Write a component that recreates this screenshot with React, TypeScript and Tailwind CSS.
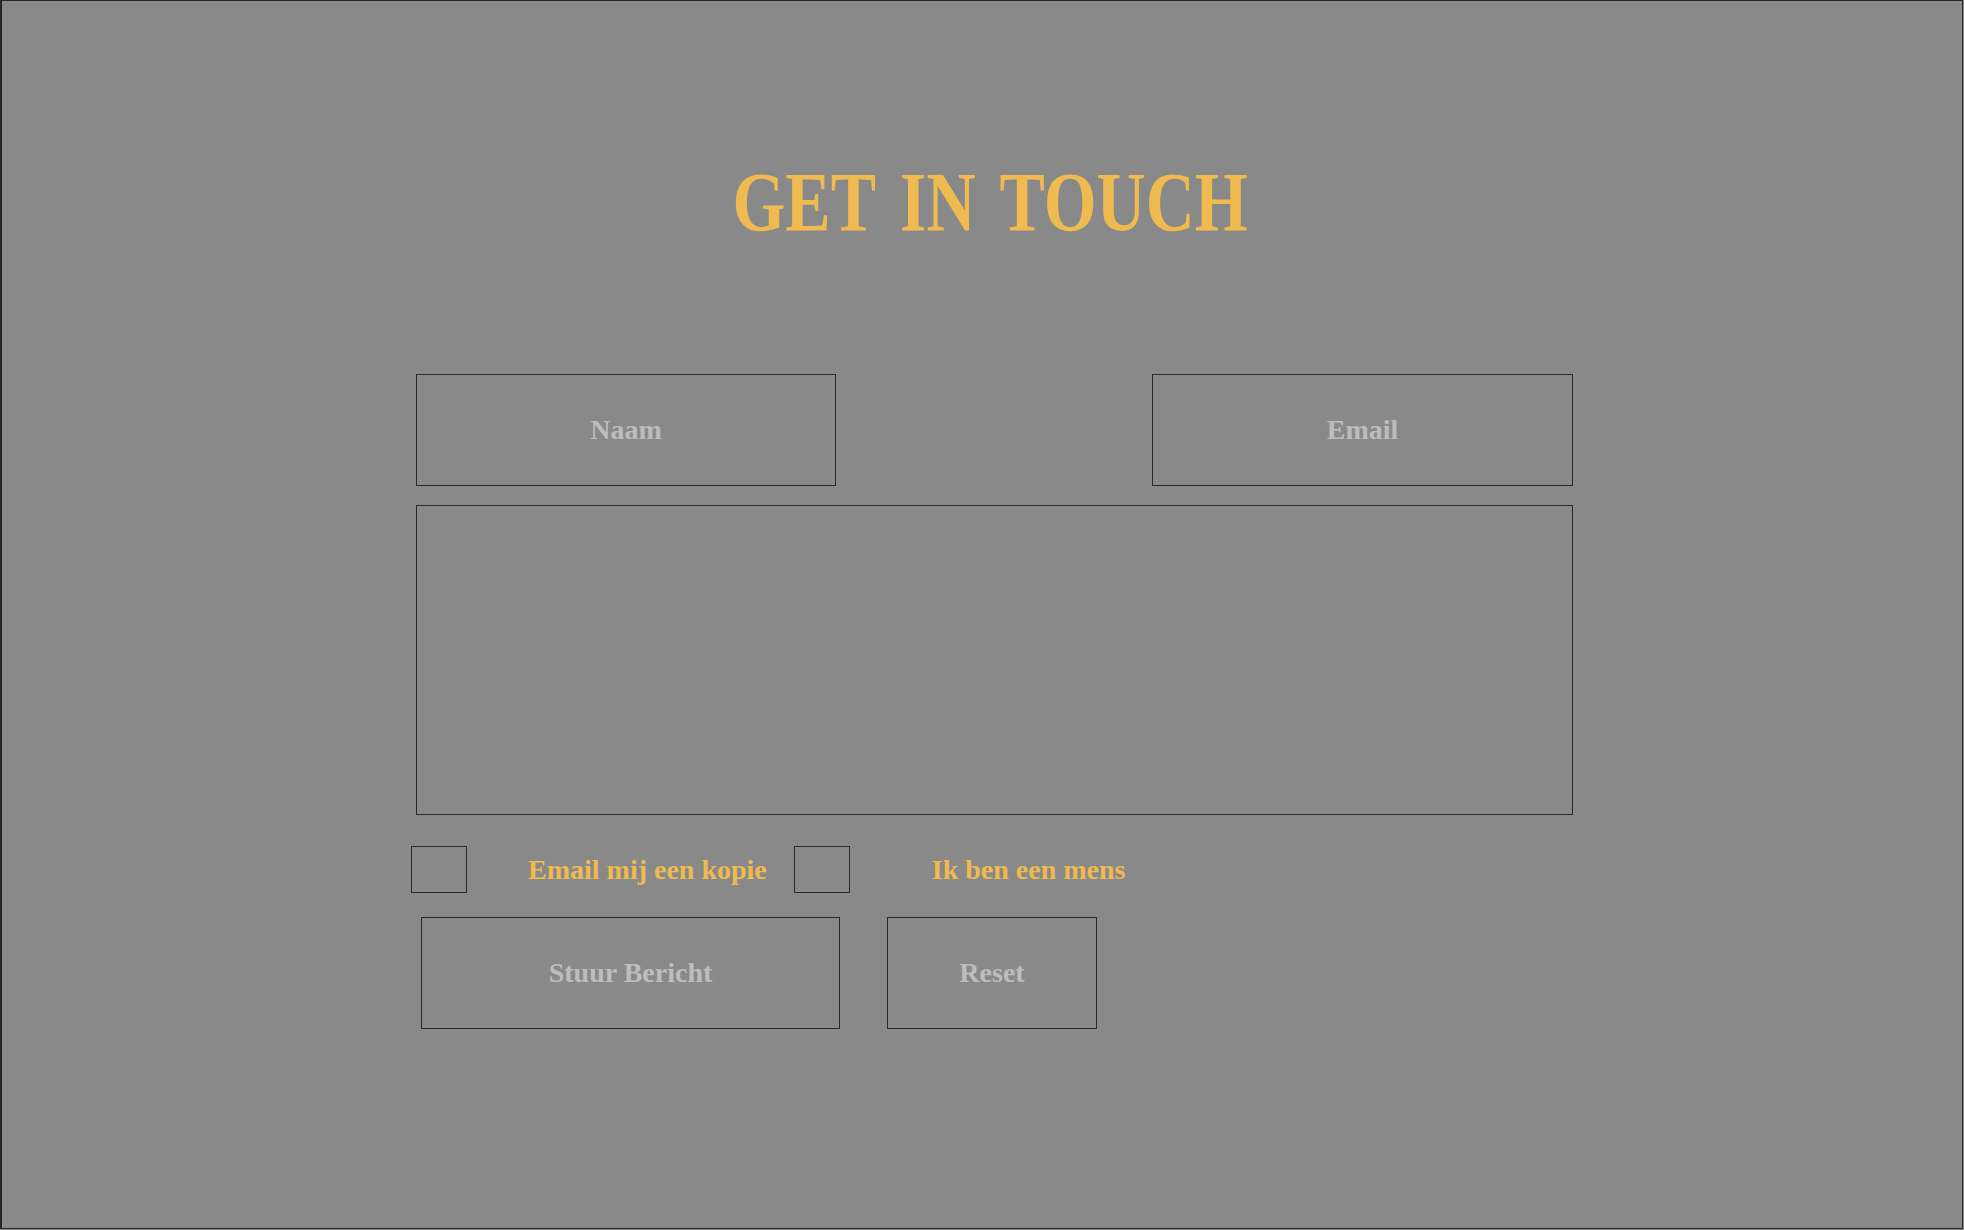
import React from "react";

export default function App() {
  return (
    <div className="w-[1964px] h-[1230px] bg-[#898989] font-['Liberation_Serif',serif]">
      <div className="w-[1963px] h-[1229px] border border-l-2 border-[#262626] bg-[#898989]">
        <div className="pl-[414px] pt-[160px]">
          <div className="w-[1157px] flex flex-col">
            <div className="flex justify-center">
              <h1 className="text-[84px] leading-none font-bold text-[#efba50] scale-x-[0.81] [word-spacing:10px] whitespace-nowrap -ml-[8px]">
                GET IN TOUCH
              </h1>
            </div>
            <div className="flex justify-between mt-[129px]">
              <input
                placeholder="Naam"
                className="w-[420px] h-[112px] border border-[#2a2a2a] bg-transparent text-center text-[28px] font-bold font-['Liberation_Serif',serif] placeholder:text-[#bdbdbd] text-[#bdbdbd] outline-none"
              />
              <input
                placeholder="Email"
                className="w-[421px] h-[112px] border border-[#2a2a2a] bg-transparent text-center text-[28px] font-bold font-['Liberation_Serif',serif] placeholder:text-[#bdbdbd] text-[#bdbdbd] outline-none"
              />
            </div>
            <textarea className="mt-[19px] w-[1157px] h-[310px] border border-[#2a2a2a] bg-transparent resize-none outline-none font-['Liberation_Serif',serif]" />
            <div className="flex items-center mt-[31px] -ml-[5px]">
              <input
                type="checkbox"
                className="appearance-none w-[56px] h-[47px] border border-[#2a2a2a] bg-transparent m-0"
              />
              <span className="ml-[61px] text-[28px] font-bold text-[#efba50] whitespace-nowrap">
                Email mij een kopie
              </span>
              <input
                type="checkbox"
                className="appearance-none w-[56px] h-[47px] border border-[#2a2a2a] bg-transparent m-0 ml-[27px]"
              />
              <span className="ml-[82px] text-[28px] font-bold text-[#efba50] whitespace-nowrap">
                Ik ben een mens
              </span>
            </div>
            <div className="flex mt-[24px] ml-[5px]">
              <button className="w-[419px] h-[112px] border border-[#2a2a2a] bg-transparent text-[28px] font-bold text-[#bdbdbd] font-['Liberation_Serif',serif]">
                Stuur Bericht
              </button>
              <button className="ml-[47px] w-[210px] h-[112px] border border-[#2a2a2a] bg-transparent text-[28px] font-bold text-[#bdbdbd] font-['Liberation_Serif',serif]">
                Reset
              </button>
            </div>
          </div>
        </div>
      </div>
    </div>
  );
}
